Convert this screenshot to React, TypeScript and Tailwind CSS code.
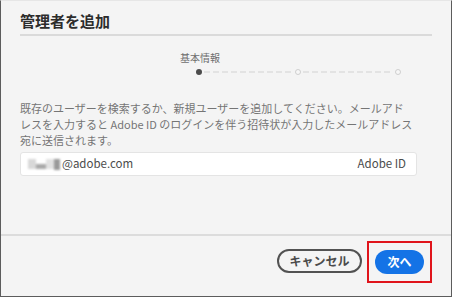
export default function App() {
  return (
    <div
      className="w-[452px] h-[297px] bg-[#f4f4f4] border-x border-b border-t border-x-[#5c5c5c] border-b-[#5c5c5c] border-t-[#e6e6e6] flex flex-col text-[#4b4b4b]"
      style={{ fontFamily: '"Noto Sans CJK JP", "Noto Sans", sans-serif' }}
    >
      {/* Header */}
      <div className="px-[19px] pt-[10px]">
        <h1 className="text-[15px] leading-[20px] font-bold text-[#2c2c2c]">管理者を追加</h1>
        <div className="mt-[3px] h-[2px] bg-[#dadada]" />
      </div>

      {/* Stepper */}
      <div className="mt-[16px]">
        <div className="pl-[179px] text-[10px] leading-[12px] text-[#6e6e6e]">基本情報</div>
        <div className="mt-[4px] pl-[195px] flex items-center h-[8px]">
          <div className="w-[6px] h-[6px] rounded-full bg-[#4b4b4b]" />
          <svg width="89" height="2" className="mx-[2px]">
            <line x1="0" y1="1" x2="89" y2="1" stroke="#d2d2d2" strokeWidth="1" strokeDasharray="6 3" />
          </svg>
          <div className="w-[6px] h-[6px] rounded-full border border-[#cfcfcf] bg-[#f7f7f7]" />
          <svg width="90" height="2" className="mx-[2px]">
            <line x1="0" y1="1" x2="90" y2="1" stroke="#d2d2d2" strokeWidth="1" strokeDasharray="6 3" />
          </svg>
          <div className="w-[6px] h-[6px] rounded-full border border-[#cfcfcf] bg-[#f7f7f7]" />
        </div>
      </div>

      {/* Description */}
      <p className="mt-[24px] px-[19px] text-[11px] leading-[16px] text-[#757575] whitespace-nowrap">
        既存のユーザーを検索するか、新規ユーザーを追加してください。メールアド
        <br />
        レスを入力すると Adobe ID のログインを伴う招待状が入力したメールアドレス
        <br />
        宛に送信されます。
      </p>

      {/* Email input */}
      <div className="mx-[19px] mt-[4px] h-[24px] w-[397px] bg-white border border-[#e4e4e4] rounded-[3px] flex items-center justify-between pl-[7px] pr-[10px]">
        <div className="flex items-center text-[11.5px] text-[#4b4b4b]">
          <div className="flex items-center h-[12px] w-[34px] blur-[1px]">
            <div className="w-[8px] h-[10px] bg-[#d8d8d8]" />
            <div className="w-[10px] h-[5px] mt-[5px] bg-[#a9a9a9]" />
            <div className="w-[8px] h-[10px] bg-[#e2e2e2]" />
            <div className="w-[6px] h-[11px] bg-[#9a9a9a]" />
          </div>
          <span>@adobe.com</span>
        </div>
        <span className="text-[11.5px] text-[#4b4b4b]">Adobe ID</span>
      </div>

      {/* Footer */}
      <div className="mt-auto border-t-2 border-[#dcdcdc] h-[62px] flex items-start justify-end pt-[5px] pr-[19px]">
        <button className="mt-[8px] h-[24px] w-[85px] rounded-full border-2 border-[#525252] text-[12px] font-bold text-[#4b4b4b] flex items-center justify-center">
          キャンセル
        </button>
        <div className="ml-[5px] w-[65px] h-[42px] border-2 border-[#e0141b] flex items-center justify-center">
          <button className="h-[24px] w-[49px] rounded-full bg-[#1473e6] text-[12px] font-bold text-white flex items-center justify-center">
            次へ
          </button>
        </div>
      </div>
    </div>
  );
}
